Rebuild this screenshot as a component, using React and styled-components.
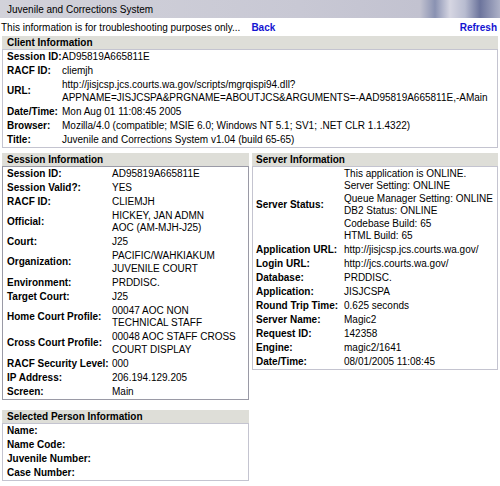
import React from 'react';
import styled, { createGlobalStyle } from 'styled-components';

const GlobalStyle = createGlobalStyle`
  html, body {
    margin: 0;
    padding: 0;
    background: #fff;
  }
  body {
    font-family: "Liberation Sans", Arial, sans-serif;
    font-size: 10px;
    color: #000;
  }
`;

const Page = styled.div`
  width: 500px;
  height: 486px;
  overflow: hidden;
  background: #fff;
`;

const TitleBar = styled.div`
  height: 18px;
  line-height: 19px;
  padding-left: 7px;
  background: linear-gradient(
    90deg,
    #d2d2da 0%,
    #c8c8d4 60%,
    #c2c2d0 84%,
    #8a92b2 87%,
    #d6d6e2 90%,
    #b8bcd0 93%,
    #6c749c 96%,
    #aeb2c8 100%
  );
`;

const InfoBar = styled.div`
  display: flex;
  justify-content: space-between;
  align-items: center;
  height: 18px;
  padding: 0 3px 0 1px;
`;

const NavLink = styled.a`
  color: #1414d2;
  font-weight: bold;
  text-decoration: none;
  margin-left: ${({ $gap }) => $gap || 0}px;
`;

const Content = styled.div`
  padding: 0 2px;
`;

const Columns = styled.div`
  display: grid;
  grid-template-columns: 247px 246px;
  gap: 3px;
  margin-top: 5px;
  align-items: start;
`;

const Stack = styled.div`
  display: flex;
  flex-direction: column;
  gap: 10px;
`;

const PanelWrap = styled.section``;

const PanelHeader = styled.div`
  height: 13px;
  line-height: 13px;
  padding-left: ${({ $pad }) => $pad}px;
  font-weight: bold;
  background: #deded8;
`;

const PanelBox = styled.div`
  border: 1px solid ${({ $dark }) => ($dark ? '#9a9aa6' : '#c4c4d0')};
  padding: 0 ${({ $pad }) => $pad - 1}px;
`;

const Row = styled.div`
  display: grid;
  grid-template-columns: ${({ $label }) => $label}px 1fr;
  align-items: center;
  padding: 1px 0 0.5px;
  line-height: 12.5px;
`;

const Label = styled.div`
  font-weight: bold;
  white-space: nowrap;
`;

const Value = styled.div`
  white-space: nowrap;
`;

const Panel = ({ title, rows, label, pad = 5, dark }) => (
  <PanelWrap>
    <PanelHeader $pad={pad}>{title}</PanelHeader>
    <PanelBox $pad={pad} $dark={dark}>
      {rows.map(([k, v]) => (
        <Row key={k} $label={label}>
          <Label>{k}</Label>
          <Value>
            {[].concat(v || []).map((line, i) => (
              <div key={i}>{line}</div>
            ))}
          </Value>
        </Row>
      ))}
    </PanelBox>
  </PanelWrap>
);

const clientRows = [
  ['Session ID:', 'AD95819A665811E'],
  ['RACF ID:', 'cliemjh'],
  [
    'URL:',
    [
      'http://jisjcsp.jcs.courts.wa.gov/scripts/mgrqispi94.dll?',
      'APPNAME=JISJCSPA&PRGNAME=ABOUTJCS&ARGUMENTS=-AAD95819A665811E,-AMain',
    ],
  ],
  ['Date/Time:', 'Mon Aug 01 11:08:45 2005'],
  ['Browser:', 'Mozilla/4.0 (compatible; MSIE 6.0; Windows NT 5.1; SV1; .NET CLR 1.1.4322)'],
  ['Title:', 'Juvenile and Corrections System v1.04 (build 65-65)'],
];

const sessionRows = [
  ['Session ID:', 'AD95819A665811E'],
  ['Session Valid?:', 'YES'],
  ['RACF ID:', 'CLIEMJH'],
  ['Official:', ['HICKEY, JAN ADMN', 'AOC (AM-MJH-J25)']],
  ['Court:', 'J25'],
  ['Organization:', ['PACIFIC/WAHKIAKUM', 'JUVENILE COURT']],
  ['Environment:', 'PRDDISC.'],
  ['Target Court:', 'J25'],
  ['Home Court Profile:', ['00047 AOC NON', 'TECHNICAL STAFF']],
  ['Cross Court Profile:', ['00048 AOC STAFF CROSS', 'COURT DISPLAY']],
  ['RACF Security Level:', '000'],
  ['IP Address:', '206.194.129.205'],
  ['Screen:', 'Main'],
];

const serverRows = [
  [
    'Server Status:',
    [
      'This application is ONLINE.',
      'Server Setting: ONLINE',
      'Queue Manager Setting: ONLINE',
      'DB2 Status: ONLINE',
      'Codebase Build: 65',
      'HTML Build: 65',
    ],
  ],
  ['Application URL:', 'http://jisjcsp.jcs.courts.wa.gov/'],
  ['Login URL:', 'http://jcs.courts.wa.gov/'],
  ['Database:', 'PRDDISC.'],
  ['Application:', 'JISJCSPA'],
  ['Round Trip Time:', '0.625 seconds'],
  ['Server Name:', 'Magic2'],
  ['Request ID:', '142358'],
  ['Engine:', 'magic2/1641'],
  ['Date/Time:', '08/01/2005 11:08:45'],
];

const personRows = [
  ['Name:', ''],
  ['Name Code:', ''],
  ['Juvenile Number:', ''],
  ['Case Number:', ''],
];

export default function App() {
  return (
    <Page>
      <GlobalStyle />
      <TitleBar>Juvenile and Corrections System</TitleBar>
      <InfoBar>
        <span>
          This information is for troubleshooting purposes only...
          <NavLink href="#" $gap={11}>Back</NavLink>
        </span>
        <NavLink href="#">Refresh</NavLink>
      </InfoBar>
      <Content>
        <Panel title="Client Information" rows={clientRows} label={55} />
        <Columns>
          <Stack>
            <Panel title="Session Information" rows={sessionRows} label={105} dark />
            <Panel title="Selected Person Information" rows={personRows} label={105} />
          </Stack>
          <Panel title="Server Information" rows={serverRows} label={88} pad={4} />
        </Columns>
      </Content>
    </Page>
  );
}
